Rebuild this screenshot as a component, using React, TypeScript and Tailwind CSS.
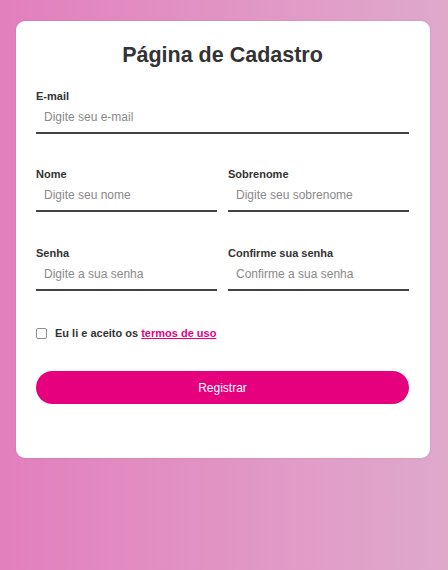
import React from "react";

function Field({ label, placeholder, type = "text" }: { label: string; placeholder: string; type?: string }) {
  return (
    <div className="flex flex-col">
      <label className="text-[11px] leading-[normal] font-bold text-[#333]">{label}</label>
      <input
        type={type}
        placeholder={placeholder}
        className="w-full px-2 py-2 text-[12px] leading-[normal] text-[#333] bg-transparent border-0 border-b-2 border-[#444] outline-none placeholder:text-[#8a8a8a]"
      />
    </div>
  );
}

export default function App() {
  return (
    <div
      className="w-full min-h-[570px] bg-gradient-to-r from-[#e27fbd] to-[#dfa9cc] pt-[21px] pl-4"
      style={{ fontFamily: '"Liberation Sans", Arial, sans-serif' }}
    >
      <div className="w-[414px] h-[437px] bg-white rounded-[9px] pt-[22px] pl-5 pr-[21px] shadow-[0_0_3px_rgba(0,0,0,0.08)]">
        <h1 className="text-center text-[21.5px] leading-[normal] font-bold text-[#333]">Página de Cadastro</h1>
        <div className="mt-[22px]">
          <Field label="E-mail" placeholder="Digite seu e-mail" type="email" />
        </div>
        <div className="mt-[34px] grid grid-cols-2 gap-x-[11px]">
          <Field label="Nome" placeholder="Digite seu nome" />
          <Field label="Sobrenome" placeholder="Digite seu sobrenome" />
        </div>
        <div className="mt-[35px] grid grid-cols-2 gap-x-[11px]">
          <Field label="Senha" placeholder="Digite a sua senha" type="password" />
          <Field label="Confirme sua senha" placeholder="Confirme a sua senha" type="password" />
        </div>
        <div className="mt-[36px] flex items-center gap-2">
          <span className="w-[11px] h-[11px] rounded-[2px] border border-[#8f8f8f] bg-white" />
          <span className="text-[11px] leading-[normal] font-bold text-[#333]">
            Eu li e aceito os{" "}
            <a href="#" className="text-[#e6007e] underline">termos de uso</a>
          </span>
        </div>
        <button className="mt-[32px] w-full h-[33px] rounded-full bg-[#e6007e] text-white text-[12px]">
          Registrar
        </button>
      </div>
    </div>
  );
}
